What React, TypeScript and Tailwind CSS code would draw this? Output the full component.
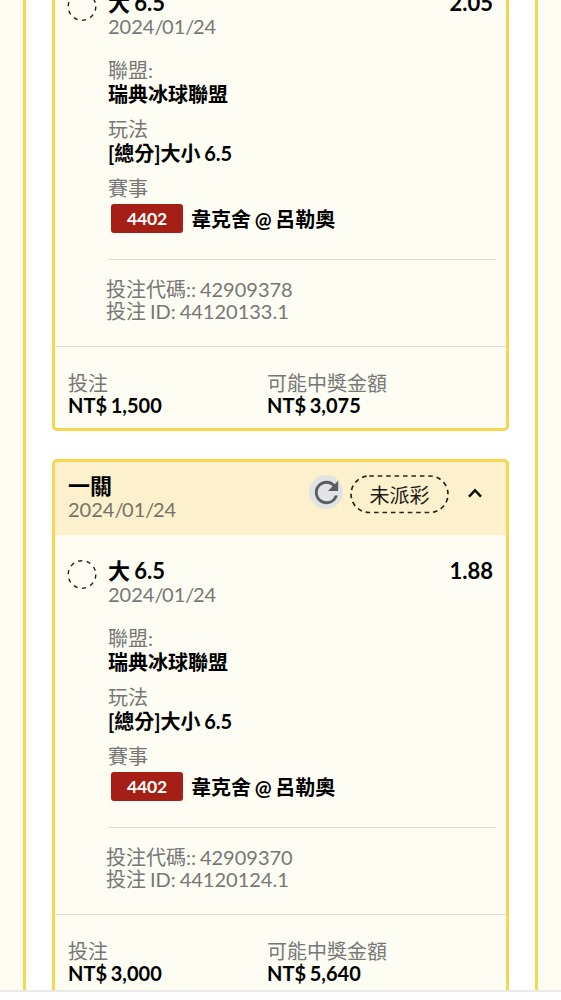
import { MdRefresh } from "react-icons/md";

type Bet = {
  odds: string;
  code: string;
  id: string;
  stake: string;
  payout: string;
};

const bets: Bet[] = [
  { odds: "2.05", code: "42909378", id: "44120133.1", stake: "NT$ 1,500", payout: "NT$ 3,075" },
  { odds: "1.88", code: "42909370", id: "44120124.1", stake: "NT$ 3,000", payout: "NT$ 5,640" },
];

function BetDate() {
  return (
    <>
      2024<span className="tracking-[-1.4px]">/</span>01<span className="tracking-[-1.4px]">/</span>24
    </>
  );
}

function BetHeader() {
  return (
    <div className="flex h-[73px] bg-[#fcf1cc] pl-[13px] pt-[11px]">
      <div className="w-[242px]">
        <div className="pt-px text-[22px] font-bold leading-[23px] text-black">一關</div>
        <div className="text-[#74736b]">
          <BetDate />
        </div>
      </div>
      <div className="-ml-px mt-0.5 flex size-[34px] items-center justify-center rounded-full bg-[#e2e3e5]">
        <MdRefresh className="size-[35px] shrink-0 text-[#5c5c5e]" />
      </div>
      <div className="ml-[7px] mt-[2px] grid h-[39px] w-[99px] place-items-center">
        <svg className="col-start-1 row-start-1" width="99" height="39" fill="none">
          <rect x="1" y="1" width="97" height="36.5" rx="18.25" stroke="#25241f" strokeWidth="1.7" strokeDasharray="4.6 3.83" />
        </svg>
        <span className="col-start-1 row-start-1 text-[#1c1b18]">未派彩</span>
      </div>
      <svg className="ml-[18px] mt-[14px]" width="16" height="12" viewBox="0 0 16 12" fill="none">
        <path d="M2 9.6 8 3.4l6 6.2" stroke="#111" strokeWidth="2.5" />
      </svg>
    </div>
  );
}

function Field({ label, value }: { label: string; value: string }) {
  return (
    <div className="mb-[11px]">
      <div className="text-[#777]">{label}</div>
      <div className="font-bold text-black">{value}</div>
    </div>
  );
}

function BetCard({ bet }: { bet: Bet }) {
  return (
    <article className="h-[540px] shrink-0 overflow-hidden rounded-[5px] border-3 border-[#f7d750] bg-[#fdfdf3]">
      <BetHeader />
      <div className="flex h-[380px] border-b border-[#dfdfda] pl-3 pr-[10px] pt-[23px]">
        <svg className="mt-px shrink-0" width="30" height="30" fill="none">
          <circle cx="15" cy="15.5" r="13.8" stroke="#222" strokeWidth="1.4" strokeDasharray="4.2 4.47" />
        </svg>
        <div className="ml-[11px] flex-1">
          <div className="flex justify-between pr-[3px] pt-px text-[22px] font-bold leading-[23px] text-black">
            <span>大 6.5</span>
            <span>{bet.odds}</span>
          </div>
          <div className="mb-5 text-[#777]">
            <BetDate />
          </div>
          <Field label="聯盟:" value="瑞典冰球聯盟" />
          <Field label="玩法" value="[總分]大小 6.5" />
          <div className="text-[#777]">賽事</div>
          <div className="mt-[4px] flex h-[29px] items-center">
            <span className="ml-[3px] flex h-[29px] w-[72px] items-center justify-center rounded-[3px] bg-[#a51f16] text-[17.5px] font-bold tracking-[-0.2px] text-white">
              4402
            </span>
            <span className="ml-[8px] font-bold text-black">韋克舍 @ 呂勒奧</span>
          </div>
          <div className="mt-[26px] border-t border-[#dfdfda]" />
          <div className="-ml-[2px] mt-[18px] leading-[22px] text-[#777]">
            <div>投注代碼:: {bet.code}</div>
            <div>投注 ID: {bet.id}</div>
          </div>
        </div>
      </div>
      <div className="grid grid-cols-[199px_1fr] pl-[13px] pt-[25px] leading-[22px]">
        <div>
          <div className="text-[#777]">投注</div>
          <div className="font-bold text-black">{bet.stake}</div>
        </div>
        <div>
          <div className="text-[#777]">可能中獎金額</div>
          <div className="font-bold text-black">{bet.payout}</div>
        </div>
      </div>
    </article>
  );
}

export default function App() {
  return (
    <div className="h-[1000px] w-[561px] overflow-hidden bg-[#fefefe] font-['Lato','Noto_Sans_CJK_TC',sans-serif] text-[20px] leading-6 [word-spacing:-1.2px]">
      <main className="h-[990px] overflow-hidden bg-[#fdfdf3] pl-[23px] pr-[23px]">
        <section className="h-[990px] w-[515px] overflow-hidden border-x-3 border-[#f7d750] bg-white px-[26px]">
          <div className="-mt-[109px] flex flex-col gap-[28px]">
            {bets.map((bet) => (
              <BetCard key={bet.id} bet={bet} />
            ))}
          </div>
        </section>
      </main>
      <div className="h-[2px] bg-[#e9e9e7]" />
    </div>
  );
}
